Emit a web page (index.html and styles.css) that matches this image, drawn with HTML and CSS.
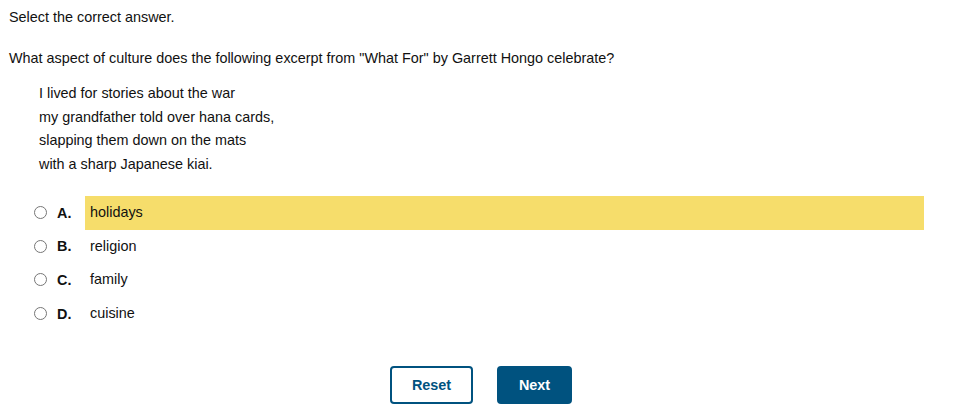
FILE: index.html
```html
<!DOCTYPE html>
<html>
<head>
<meta charset="utf-8">
<link rel="stylesheet" href="styles.css">
</head>
<body>
<div class="page">
  <p class="instr">Select the correct answer.</p>
  <p class="question">What aspect of culture does the following excerpt from "What For" by Garrett Hongo celebrate?</p>
  <div class="poem">
    <div>I lived for stories about the war</div>
    <div>my grandfather told over hana cards,</div>
    <div>slapping them down on the mats</div>
    <div>with a sharp Japanese kiai.</div>
  </div>
  <div class="options">
    <label class="opt"><span class="radio"></span><span class="letter">A.</span><span class="text hl">holidays</span></label>
    <label class="opt"><span class="radio"></span><span class="letter">B.</span><span class="text">religion</span></label>
    <label class="opt"><span class="radio"></span><span class="letter">C.</span><span class="text">family</span></label>
    <label class="opt"><span class="radio"></span><span class="letter">D.</span><span class="text">cuisine</span></label>
  </div>
  <div class="buttons">
    <button class="btn reset">Reset</button>
    <button class="btn next">Next</button>
  </div>
</div>
</body>
</html>
```
FILE: styles.css
```css
html, body { margin: 0; padding: 0; background: #fff; }
body {
  font-family: "Liberation Sans", Arial, sans-serif;
  font-size: 14.4px;
  color: #111;
}
.page { padding: 9px 0 0 9px; }
p { margin: 0; line-height: 16px; }
.instr { margin-bottom: 25px; }
.question { margin-bottom: 16px; }
.poem { padding-left: 30px; line-height: 23.5px; margin-bottom: 20px; }
.options { display: flex; flex-direction: column; width: 915px; }
.opt { display: flex; align-items: center; height: 33.6px; }
.radio {
  width: 11px; height: 11px;
  border: 1px solid #767676;
  border-radius: 50%;
  margin-left: 25px;
  flex: none;
}
.letter { font-weight: bold; width: 28px; margin-left: 10px; }
.text { flex: 1; height: 33.6px; line-height: 33.6px; padding-left: 5px; }
.hl { background: #f6dd6b; }
.buttons {
  display: flex; justify-content: center; gap: 24px;
  padding-right: 22px;
  margin-top: 36px;
}
.btn {
  font-family: "Liberation Sans", Arial, sans-serif;
  font-size: 14.4px; font-weight: bold;
  height: 38px; border-radius: 4px;
  border: 2px solid #00527f;
  cursor: pointer;
}
.reset { background: #fff; color: #00527f; width: 83px; }
.next { background: #00527f; color: #fff; width: 75px; }
```
